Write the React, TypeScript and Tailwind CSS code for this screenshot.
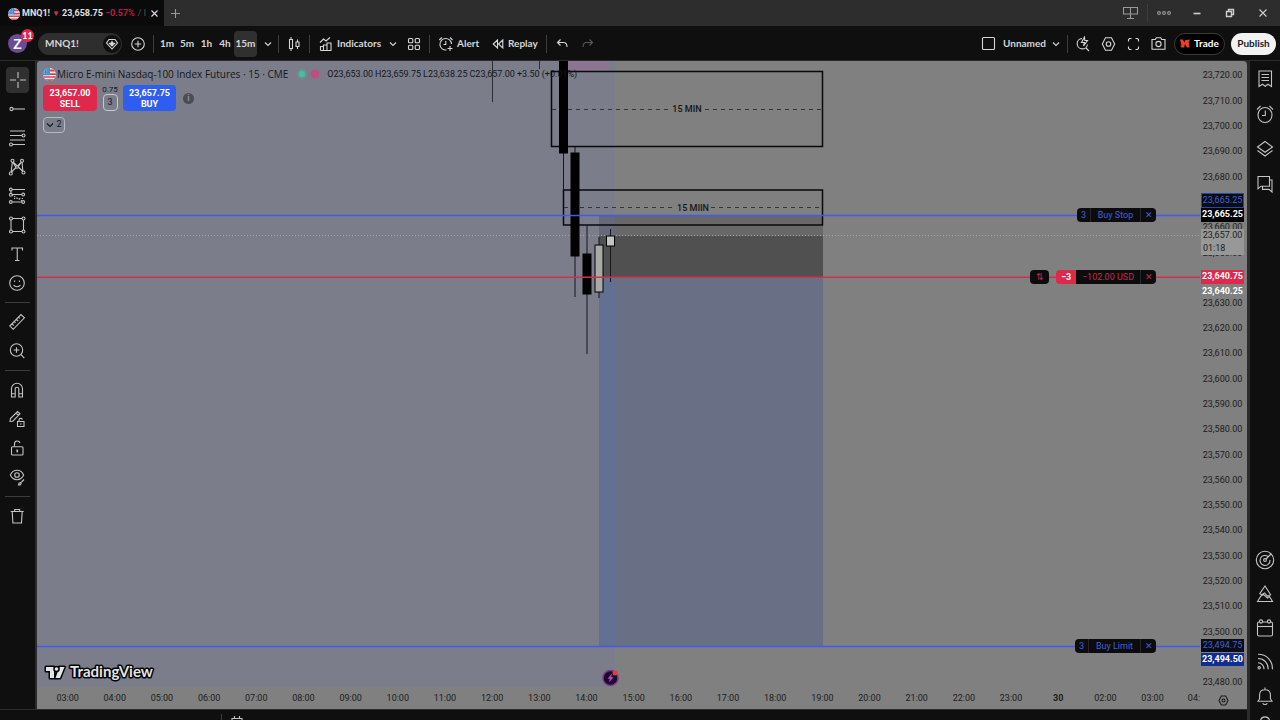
import React from "react";

type IconProps = { children: React.ReactNode; className?: string; w?: number; h?: number };

function Icon({ children, className = "", w = 20, h = 20 }: IconProps) {
  return (
    <svg
      width={w}
      height={h}
      viewBox={`0 0 ${w} ${h}`}
      fill="none"
      stroke="currentColor"
      strokeWidth={1.1}
      className={`shrink-0 ${className}`}
      aria-hidden="true"
    >
      {children}
    </svg>
  );
}

const Chevron = () => (
  <Icon w={8} h={8}><path d="M1 2.5 4 5.5 7 2.5" /></Icon>
);

const Flag = ({ size }: { size: number }) => (
  <svg width={size} height={size} viewBox="0 0 12 12" className="shrink-0" aria-hidden="true">
    <clipPath id={`flag${size}`}><circle cx="6" cy="6" r="6" /></clipPath>
    <g clipPath={`url(#flag${size})`}>
      <path fill="#f1f1f3" d="M0 0h12v12H0z" />
      <path fill="#d8424e" d="M6 1.4h6v1.8H6zM6 4.8h6v1.6H6zM0 7.6h12v1.5H0zM0 10.4h12V12H0z" />
      <path fill="#2f86d6" d="M0 0h6.4v6.6H0z" />
      <path stroke="#cfe4f7" strokeWidth=".6" strokeDasharray=".8 .8" d="M1 2h5M1 3.6h5M1 5.2h5" />
    </g>
  </svg>
);

const Divider = () => <div className="h-[18px] w-px shrink-0 bg-[#3d3d3d]" />;

const drawTools: { label: string; icon: React.ReactNode }[][] = [
  [
    { label: "Cross", icon: <path d="M10 2v6M10 12v6M2 10h6M12 10h6" /> },
    { label: "Trend line", icon: <><circle cx="4.5" cy="10" r="1.6" /><path d="M6.2 10H18" /></> },
    { label: "Fib retracement", icon: <><path d="M3 3h15M3 7.5h12M3 12h15M6 16.5h12" /><circle cx="16.5" cy="7.5" r="1.5" fill="#0f0f0f" /><circle cx="4" cy="16.5" r="1.5" fill="#0f0f0f" /></> },
    { label: "Patterns", icon: <><path d="M4 16 5.5 4.5 16 14.5M16 16 15 4.5 4.5 15M5.5 4.5l3.500 6M15 4.500 11 10" /><circle cx="5.5" cy="3.8" r="1.5" fill="#0f0f0f" /><circle cx="15" cy="3.8" r="1.5" fill="#0f0f0f" /><circle cx="3.8" cy="16.5" r="1.5" fill="#0f0f0f" /><circle cx="16.5" cy="15.5" r="1.5" fill="#0f0f0f" /><circle cx="10" cy="10" r="1.3" fill="#0f0f0f" /></> },
    { label: "Prediction", icon: <><path d="M4 3.5h14M4 8.5h12M4 16h12" /><path strokeDasharray="1.2 1.4" d="M5 9l10 6M7 12.5h10" /><path d="M4 4v5" /><circle cx="3.8" cy="3.5" r="1.4" fill="#0f0f0f" /><circle cx="3.8" cy="8.8" r="1.4" fill="#0f0f0f" /><circle cx="16.2" cy="8.5" r="1.4" fill="#0f0f0f" /><circle cx="3.8" cy="16" r="1.4" fill="#0f0f0f" /><circle cx="16.2" cy="16" r="1.4" fill="#0f0f0f" /></> },
    { label: "Rectangle", icon: <><path d="M4 3.5h12.5v13H4z" /><circle cx="4" cy="3.5" r="1.5" fill="#0f0f0f" /><circle cx="16.5" cy="3.5" r="1.5" fill="#0f0f0f" /><circle cx="4" cy="16.5" r="1.5" fill="#0f0f0f" /><circle cx="16.5" cy="16.5" r="1.5" fill="#0f0f0f" /></> },
    { label: "Text", icon: <path d="M5 6.5V4h10.500v2.500M10.250 4v12.500M8 16.500h4.500" /> },
    { label: "Emoji", icon: <><circle cx="10" cy="10" r="7.300" /><path d="M7.600 7.500v1.500M12.400 7.500v1.500M6.500 12c1.500 2.300 5.500 2.300 7 0" /></> },
  ],
  [
    { label: "Measure", icon: <path d="M2.800 14 14 2.600l3.400 3.200L6.200 17.300zM5 11.800l1.700 1.700M7.200 9.500l1.300 1.300M9.400 7.200l1.800 1.800M11.600 5l1.300 1.300" /> },
    { label: "Zoom in", icon: <><circle cx="9.500" cy="9" r="6.200" /><path d="M14 13.600l3.300 3.600M9.500 6.200v5.600M6.700 9h5.600" /></> },
  ],
  [
    { label: "Magnet", icon: <path d="M4.500 17V8.700a5.500 5.500 0 0 1 11 0V17h-3.700V9a1.800 1.800 0 0 0-3.600 0v8zM4.500 13.800h3.700M11.800 13.800h3.700" /> },
    { label: "Stay in drawing mode", icon: <><path d="M3 12.500 3.500 9.500 10.500 2.500l2.500 2.300-7.200 7.400zM9 4l2.500 2.500M10.500 12.500h6.500v5h-6.500zM12 12.500v-1.600c0-2 3.200-2 3.400-.3" /><path d="M13.800 14.300v1.500" /></> },
    { label: "Lock all drawings", icon: <><rect x="4.500" y="8.700" width="11.500" height="8.300" rx="1" /><path d="M7.500 8.500V6c0-3.700 4.700-3.800 5.400-1" /><path strokeWidth="1.600" d="M10.250 11.500v2.800" /></> },
    { label: "Hide all drawings", icon: <><path d="M3.400 8c2.700-6.300 10.500-6.300 13.200 0-2.700 6.300-10.500 6.300-13.200 0z" /><circle cx="10" cy="8" r="2.300" /><path d="M11.500 18c.2-2 1.200-2.800 2.500-2.500.5 1.700-1 2.800-2.500 2.500zM14.500 15l2.500-2.500" /></> },
  ],
  [{ label: "Remove", icon: <path d="M3.700 5.500h13M7.700 5.200V3.500h5v1.700M5.200 5.500l.7 11.500h8.600l.7-11.500" /> }],
];

const sideTop = [
  { label: "Watchlist", icon: <path d="M4 2h12.500v15.500L13 15.200l-2.750 2-2.750-2L4 17.500zM6.500 5.500h7.500M6.500 8.500h7.500M6.500 11.500h7.500" /> },
  { label: "Alerts", icon: <><ellipse cx="10" cy="11" rx="7" ry="7.500" /><path d="M10.300 6.500v5H7M2 5.500 5.500 2M18 5.500 14.500 2" /></> },
  { label: "Object tree", icon: <path d="M10 2.500 17.500 8 10 13.300 2.500 8zM2.500 11.500 10 17l7.500-5.500" /> },
  { label: "Chats", icon: <path d="M3 2.500h11.500v9.700H6L3 14.800zM14.500 6H17v12l-3-2.600H7.500v-3" /> },
];

const sideBottom = [
  { label: "Screeners", icon: <><circle cx="10" cy="10" r="8.700" /><path d="M13.200 6.600A5 5 0 1 0 15 10" /><circle cx="10" cy="10" r="1.400" /><path d="m11 9 5-5" /></> },
  { label: "Pine", icon: <path d="M10 2 4.800 9.600l2 1.200 2.700-1.900 3 3.300 3.100-1.500zM2.500 17.500 6 12l2.500-1.500 4 3.500 2-1.500 3 5z" /> },
  { label: "Calendars", icon: <><rect x="2.500" y="4" width="15" height="14" rx="1.500" /><path d="M2.500 8.500h15" /><circle cx="6" cy="3.500" r="1.600" fill="#0f0f0f" /><circle cx="14" cy="3.500" r="1.600" fill="#0f0f0f" /></> },
  { label: "Ideas stream", icon: <><path d="M3 2.200c9 0 14.500 6.500 14.500 15M3 6.500c6.200 0 10.200 4.500 10.200 10.700M3 10.700c3.500 0 6 2.800 6 6.500" /><circle cx="4.200" cy="15.800" r="1.200" /></> },
  { label: "Notifications", icon: <path d="M10 1.500v2M3 15.200l1.600-2.500V8.500C5 2.200 15 2.200 15.400 8.500v4.200L17 15.200zM7.700 17.200c.8 1.800 3.800 1.800 4.600 0" /> },
];

const prices = Array.from({ length: 25 }, (_, i) => {
  const v = 23720 - i * 10;
  return `${Math.floor(v / 1000)},${String(v % 1000).padStart(3, "0")}.00`;
});

const coveredPrices = ["23,670.00", "23,660.00", "23,650.00", "23,640.00", "23,490.00"];

const times = [
  ...Array.from({ length: 21 }, (_, i) => `${String(i + 3).padStart(2, "0")}:00`),
  "30", "02:00", "03:00",
];

function TabStrip() {
  return (
    <div className="flex h-[26px] shrink-0 bg-[#2d2d2d] text-[#e0e0e0]">
      <div className="flex w-[164px] items-center bg-[#0a0a0a] pl-2 pt-px text-[9px] font-bold">
        <Flag size={12} />
        <span className="ml-[2px]">MNQ1!</span>
        <span className="mx-[2px] text-[8px] text-[#e0284a]">▼</span>
        <span>23,658.75</span>
        <span className="ml-[2px] text-[#b8203d]">−0.57%</span>
        <span className="ml-[3px] whitespace-nowrap font-normal text-[#555]">/ l</span>
        <button aria-label="Close tab" className="ml-auto mr-[5px]">
          <Icon w={9} h={9}><path d="m1.500 1.500 6 6m0-6-6 6" /></Icon>
        </button>
      </div>
      <button aria-label="New tab" className="ml-[6px] text-[#999]">
        <Icon w={11} h={11}><path d="M5.500 1v9M1 5.500h9" /></Icon>
      </button>
      <div className="ml-auto flex items-center text-[#999]">
        <button aria-label="Layouts" className="mr-2">
          <Icon w={17} h={16}><path d="M1.500 2.500h14v6.500h-14zM8.500 2.500v11M5 13.500h7" /></Icon>
        </button>
        <Divider />
        <button aria-label="More" className="ml-2">
          <Icon w={16} h={8}><circle cx="3" cy="4" r="1.400" /><circle cx="8" cy="4" r="1.400" /><circle cx="13" cy="4" r="1.400" /></Icon>
        </button>
        <div className="flex text-[#cfcfcf]">
          <button aria-label="Minimize" className="grid w-[33px] place-items-center pl-4">
            <Icon w={10} h={10}><path strokeWidth="1.600" d="M1.500 5.500h7" /></Icon>
          </button>
          <button aria-label="Restore" className="grid w-[33px] place-items-center pl-4">
            <Icon w={10} h={10}><path strokeWidth="1.400" d="M1.500 3.500h5v5h-5zM3.500 3V1.500h5v5H7" /></Icon>
          </button>
          <button aria-label="Close" className="grid w-[42px] place-items-center pl-2">
            <Icon w={10} h={10}><path d="m1.500 1.500 7 7m0-7-7 7" /></Icon>
          </button>
        </div>
      </div>
    </div>
  );
}

function Toolbar() {
  return (
    <header className="mb-px flex h-[34px] shrink-0 items-center bg-[#0f0f0f] pr-1 pt-px font-['Lato','Open_Sans',sans-serif] text-[10px] font-bold text-[#d6d6d6]">
      <button aria-label="Account" className="relative ml-2 grid size-[19px] place-items-center rounded-full bg-[#6b4b94] text-[14px] leading-none text-white">
        Z
        <span className="absolute -right-[7px] -top-[5px] grid size-[13px] place-items-center rounded-full bg-[#e0284a] text-[9px]">11</span>
      </button>
      <button className="ml-[11px] flex h-[22px] w-[84px] items-center justify-between rounded-full bg-[#2e2e2e] pl-[7px] pr-px">
        MNQ1!
        <span className="grid size-[18px] place-items-center rounded-full bg-[#0f0f0f]">
          <Icon w={14} h={14}><path d="M4 2.500h6l2.500 3.500L7 12 1.500 6z" /><path fill="currentColor" d="M7 4.500 8 6l1.600.3L7 9 4.400 6.300 6 6z" /></Icon>
        </span>
      </button>
      <button aria-label="Compare" className="ml-2 mr-[7px]">
        <Icon w={16} h={16}><circle cx="8" cy="8" r="6.300" /><path d="M8 4.800v6.400M4.800 8h6.400" /></Icon>
      </button>
      <Divider />
      <div className="ml-[3px] flex items-center">
        <button className="w-[20px]">1m</button>
        <button className="w-[20px]">5m</button>
        <button className="w-[19px]">1h</button>
        <button className="w-[18px]">4h</button>
        <button className="h-[26px] w-[23px] rounded bg-[#303030]">15m</button>
        <button aria-label="Intervals" className="grid w-[21px] place-items-center"><Chevron /></button>
      </div>
      <Divider />
      <button aria-label="Chart type" className="grid w-[30px] place-items-center">
        <Icon w={14} h={18}><path d="M2.500 4.500h3v9h-3zM4 2v2.500M4 13.500V16M9 7h3v4.500H9zM10.500 4.500V7M10.500 11.500V14" /></Icon>
      </button>
      <Divider />
      <button className="ml-[9px] flex w-[64px] items-center gap-1">
        <Icon w={14} h={16}><path d="M1.500 14.500v-4h3v4M4.500 14.500V9h3.500v5.500M8 14.500V7h4v7.500zM1.500 14.500H8M1 6.500 4.500 3l2.500 2L11 1.500" /></Icon>
        Indicators
      </button>
      <button aria-label="Favorite indicators" className="ml-[6px]"><Chevron /></button>
      <button aria-label="Templates" className="ml-[10px] mr-2">
        <Icon w={14} h={14}><rect x="1.500" y="1.500" width="4.300" height="4.300" rx="1" /><rect x="8.200" y="1.500" width="4.300" height="4.300" rx="1" /><rect x="1.500" y="8.200" width="4.300" height="4.300" rx="1" /><rect x="8.200" y="8.200" width="4.300" height="4.300" rx="1" /></Icon>
      </button>
      <Divider />
      <button className="ml-2 flex w-[43px] items-center gap-[3px]">
        <Icon w={16} h={16}><path d="M8.500 14A5.800 5.800 0 1 1 13.500 8M7.800 5v3.500H5.500M1.200 4 4 1.500M14.500 4 12 1.500M12 10v5M9.500 12.500h5" /></Icon>
        Alert
      </button>
      <button className="ml-[11px] flex w-[54px] items-center gap-1">
        <Icon w={12} h={12}><path d="M5.500 2 1.200 6l4.300 4zM10.800 2 6.500 6l4.300 4z" /></Icon>
        Replay
      </button>
      <Divider />
      <button aria-label="Undo" className="ml-[9px]"><Icon w={13} h={12}><path d="M4.500 1.500 1.500 4.500l3 3M1.800 4.500h5.700c2 0 3.500 1.500 3.500 4.500" /></Icon></button>
      <button aria-label="Redo" className="ml-[12px] text-[#5a5a5a]"><Icon w={13} h={12}><path d="M8.500 1.500l3 3-3 3M11.200 4.500H5.500C3.500 4.500 2 6 2 9" /></Icon></button>

      <div className="ml-auto flex items-center">
        <button className="flex w-[66px] items-center gap-[7px]">
          <Icon w={15} h={15}><rect x="1.500" y="1.500" width="12" height="12" rx="1" /></Icon>
          Unnamed
        </button>
        <button aria-label="Manage layouts" className="ml-[5px] mr-[7px]"><Chevron /></button>
        <Divider />
        <button aria-label="Quick search" className="grid w-[29px] place-items-center">
          <Icon w={14} h={16}><path d="M6 2.500a5.200 5.200 0 1 0 5.500 6M10 12l3 3M8.500 1 5.500 6.500h3L7.500 10l4-5.500H8.800z" /></Icon>
        </button>
        <button aria-label="Settings" className="grid w-[22px] place-items-center">
          <Icon w={15} h={16}><path d="M4.500 1.700h6L13.700 8l-3.200 6.300h-6L1.300 8z" /><circle cx="7.500" cy="8" r="2.300" /></Icon>
        </button>
        <button aria-label="Fullscreen" className="grid w-[28px] place-items-center">
          <Icon w={13} h={14}><path d="M1.500 4.500v-2l1-1h2M8.500 1.500h2l1 1v2M11.500 9.500v2l-1 1h-2M4.500 12.500h-2l-1-1v-2" /></Icon>
        </button>
        <button aria-label="Snapshot" className="grid w-[23px] place-items-center">
          <Icon w={15} h={15}><path d="M1 3.500h3.300l1-1.700h4.400l1 1.700H14v9.700H1z" /><circle cx="7.500" cy="8" r="2.600" /></Icon>
        </button>
        <button className="ml-1 flex h-[22px] w-[51px] items-center gap-1 rounded-full border border-[#3a3a3a] bg-black pl-[5px] text-white">
          <svg width="10" height="9" viewBox="0 0 10 9" className="shrink-0" aria-hidden="true"><path fill="#f0401f" d="M0 .5h2.600l1.900 3L5.500 1 10 .5 8.700 3l.8 5.500H7L5 5l-.8 3.500H1.500L.3 7l1.200-1z" /></svg>
          Trade
        </button>
        <button className="ml-[6px] h-[22px] w-[45px] rounded-full bg-[#f2f2f2] text-[#1a1a1a]">Publish</button>
      </div>
    </header>
  );
}

function DrawingTools() {
  return (
    <nav className="w-[35px] shrink-0 bg-[#0f0f0f] pt-1 text-[#c4c4c4]">
      {drawTools.map((group, g) => (
        <div key={g}>
          {g > 0 && <hr className="mx-[5px] mb-1 mt-[5px] border-[#3d3d3d]" />}
          {group.map((tool) => (
            <button key={tool.label} aria-label={tool.label} className="flex h-[29px] w-full items-center pl-[6px]">
              <span className={tool.label === "Cross" ? "flex h-[26px] w-[23px] items-center justify-center rounded bg-[#303030]" : "flex w-[22px] items-center justify-center"}>
                <Icon>{tool.icon}</Icon>
              </span>
            </button>
          ))}
        </div>
      ))}
    </nav>
  );
}

function Candle({ x, top, bottom, high, low, fill }: { x: number; top: number; bottom: number; high: number; low: number; fill: string }) {
  return (
    <g>
      <path d={`M${x} ${high}V${low}`} stroke="#15171b" />
      <rect x={x - 4} y={top} width={8} height={bottom - top} fill={fill} stroke="#000" />
    </g>
  );
}

function Plot() {
  return (
    <svg className="absolute inset-0 h-full w-full" aria-label="15 minute price chart">
      <g transform="translate(-37 -61)">
        <rect x="37" y="61" width="578" height="626" fill="#7b7e8a" />
        <rect x="568" y="61" width="42" height="10" fill="#8c7590" />
        <rect x="599" y="215" width="224" height="21" fill="#686868" />
        <rect x="599" y="236" width="224" height="41" fill="#505050" />
        <rect x="599" y="277" width="224" height="369" fill="#696f84" />
        <rect x="599" y="277" width="16" height="369" fill="#627092" />
        <rect x="599" y="215" width="16" height="21" fill="#66697a" />

        <path d="M492.500 61V102M539.500 61V69" stroke="#2c2e33" />
        <g fill="none" stroke="#08090b" strokeWidth="1.500">
          <rect x="551.500" y="71.500" width="271" height="75" />
          <rect x="563.500" y="190" width="259" height="35" />
        </g>
        <g stroke="#33353a" strokeDasharray="4 4">
          <path d="M552 109.500H670M705 109.500H822" />
          <path d="M564 207.500H675M711 207.500H822" />
        </g>
        <g fontSize="9" fontWeight="500" fill="#15161a" textAnchor="middle">
          <text x="687" y="112">15 MIN</text>
          <text x="693" y="211">15 MIIN</text>
        </g>

        <path d="M37 235.500H4000" stroke="#a3a3a3" strokeDasharray="1 2" />
        <Candle x={563.5} top={50} bottom={153} high={50} low={190} fill="#000" />
        <Candle x={575} top={153} bottom={256} high={147} low={297} fill="#000" />
        <Candle x={587} top={254} bottom={294} high={225} low={354} fill="#000" />
        <Candle x={599} top={245} bottom={292} high={237} low={298} fill="#a9aaa6" />
        <Candle x={610.5} top={236} bottom={246} high={229} low={282} fill="#c3c3c1" />

        <g strokeWidth="1.400">
          <path d="M37 215.500H4000M37 646.500H4000" stroke="#4259ea" />
          <path d="M37 277.300H4000" stroke="#d42e4c" />
        </g>

        <g transform="translate(610.500 678)">
          <circle r="7.500" fill="#1c0a26" stroke="#7c3594" strokeWidth="1.500" />
          <path d="M1.500-4.500-3 .8h2.300L-1.500 4.500 3-.8H.7z" fill="#b44ad0" />
          <circle cx="4.500" cy="-5" r="2.500" fill="#e53a3f" />
        </g>

        <g stroke="#000" strokeWidth="3" strokeLinejoin="round" fill="#e4e5e8" paintOrder="stroke">
          <path d="M46 667h8v11h-4v-7h-4zM59.500 667h5L60 678h-4.500z" />
          <circle cx="56.500" cy="669" r="1.800" />
          <text x="70" y="677" fontSize="15" fontWeight="700" fontFamily="Lato, sans-serif">TradingView</text>
        </g>
      </g>
    </svg>
  );
}

function Legend() {
  return (
    <div className="relative pl-[6px] pt-[5px] text-[#15161a]">
      <div className="flex h-4 items-center">
        <Flag size={13} />
        <h1 className="ml-px whitespace-nowrap font-['Open_Sans','Noto_Sans',sans-serif] text-[10px]">Micro E-mini Nasdaq-100 Index Futures · 15 · CME</h1>
        <span className="ml-[11px] size-[6px] rounded-full bg-[#3fc49b] ring-2 ring-[#3fc49b]/30" />
        <span className="ml-[6px] size-[8px] rounded-full bg-[#b94f82] ring-2 ring-[#b94f82]/30" />
        <div className="ml-2 flex gap-[2px] whitespace-nowrap pt-px text-[9px]">
          <span>O23,653.00</span><span>H23,659.75</span><span>L23,638.25</span><span>C23,657.00</span><span>+3.50 (+0.01%)</span>
        </div>
      </div>
      <div className="mt-[3px] flex h-[26px] items-center text-[9px] leading-[11px]">
        <button className="h-[26px] w-[54px] rounded bg-[#e0284a] pt-px font-bold text-white">23,657.00<span className="block">SELL</span></button>
        <div className="w-[26px] text-center">
          <div className="text-[8px] leading-[8px]">0.75</div>
          <button className="h-[17px] w-[15px] rounded border border-[#c9c9c9]">3</button>
        </div>
        <button className="h-[26px] w-[53px] rounded bg-[#2f5df0] pt-px font-bold text-white">23,657.75<span className="block">BUY</span></button>
        <span className="ml-[7px] grid size-[11px] place-items-center rounded-full bg-[#4b4d53] font-bold leading-none text-[#8b8d95]">i</span>
      </div>
      <button className="mt-[6px] flex h-4 w-[22px] items-center justify-center gap-[2px] rounded-sm border border-[#b9bac0] text-[9px]">
        <Chevron />2
      </button>
    </div>
  );
}

function OrderTags() {
  return (
    <div className="text-[9px] leading-[14px]">
      <div className="absolute right-11 top-[147px] flex h-[14px] items-center divide-x divide-[#262626] rounded-sm bg-[#0c0c0e] text-[#4160d8]">
        <span className="w-[14px] text-center">3</span>
        <span className="w-[50px] text-center">Buy Stop</span>
        <button aria-label="Cancel buy stop" className="w-[15px]">✕</button>
      </div>
      <div className="absolute right-11 top-[209px] flex h-[14px] items-center whitespace-nowrap text-[#c02c48]">
        <button aria-label="Reverse position" className="mr-[7px] h-[14px] w-[19px] rounded-sm bg-[#0c0c0e]">⇅</button>
        <span className="w-5 rounded-l-sm bg-[#e0284a] text-center font-bold text-white">−3</span>
        <span className="w-[64px] bg-[#0c0c0e] text-center">−102.00 USD</span>
        <button aria-label="Close position" className="w-[16px] rounded-r-sm border-l border-[#262626] bg-[#0c0c0e]">✕</button>
      </div>
      <div className="absolute right-11 top-[578px] flex h-[14px] items-center divide-x divide-[#262626] rounded-sm bg-[#0c0c0e] text-[#4160d8]">
        <span className="w-[14px] text-center">3</span>
        <span className="w-[52px] text-center">Buy Limit</span>
        <button aria-label="Cancel buy limit" className="w-[15px]">✕</button>
      </div>
    </div>
  );
}

function PriceAxis() {
  const tag = "absolute left-px w-[43px] text-center leading-[13px]";
  return (
    <div className="relative flex w-[47px] shrink-0 flex-col bg-[#808080] pt-[2px]">
      {prices.map((p) => (
        <div key={p} className="flex flex-1 items-center justify-center pr-[2px] pt-px">{coveredPrices.includes(p) ? "" : p}</div>
      ))}
      <button aria-label="Axis settings" className="flex h-[14px] justify-center">
        <Icon w={11} h={11}><path d="M3.300 1h4.400L10 5.500 7.700 10H3.300L1 5.500z" /><circle cx="5.500" cy="5.500" r="1.500" /></Icon>
      </button>
      <span className={`${tag} top-[132px] border border-[#2746a8] bg-[#0a0c14] text-[#4160d8]`}>23,665.25</span>
      <span className={`${tag} top-[160px]`}>23,660.00</span>
      <span className={`${tag} top-[186px]`}>23,650.00</span>
      <span className={`${tag} top-[147px] h-[14px] bg-black font-bold text-white`}>23,665.25</span>
      <span className={`${tag} top-[168px] bg-[#989898] text-left leading-[12px]`}><span className="block text-center">23,657.00</span><span className="pl-[2px]">01:18</span></span>
      <span className={`${tag} top-[209px] h-[14px] bg-[#e0284a] font-bold text-white`}>23,640.75</span>
      <span className={`${tag} top-[224px] font-bold text-white`}>23,640.25</span>
      <span className={`${tag} top-[578px] bg-[#0a0c14] text-[#4160d8]`}>23,494.75</span>
      <span className={`${tag} top-[592px] bg-[#122d91] font-bold text-white`}>23,494.50</span>
    </div>
  );
}

export default function App() {
  return (
    <div className="flex h-screen flex-col overflow-hidden bg-[#2b2b2b] font-['Roboto','Open_Sans',sans-serif] [&_button]:cursor-pointer">
      <TabStrip />
      <Toolbar />
      <div className="flex min-h-0 flex-1">
        <div className="flex min-w-0 flex-1 flex-col">
          <div className="flex min-h-0 flex-1">
            <DrawingTools />
            <main className="ml-[2px] flex min-w-0 flex-1 overflow-hidden rounded-t text-[9px] text-[#1c1c1c]">
              <div className="flex min-w-0 flex-1 flex-col bg-[#808080]">
                <div className="relative min-h-0 flex-1">
                  <Plot />
                  <Legend />
                  <OrderTags />
                </div>
                <div className="flex h-[21px] shrink-0 items-center overflow-hidden pl-[7px] text-center">
                  {times.map((t, i) => (
                    <span key={i} className={t === "30" ? "flex-1 font-bold" : "flex-1"}>{t}</span>
                  ))}
                  <span className="w-6 text-right">04:</span>
                </div>
              </div>
              <PriceAxis />
            </main>
          </div>
          <footer className="mt-px flex h-[10px] shrink-0 items-end overflow-hidden bg-[#0f0f0f] pl-[221px] text-[#c4c4c4]">
            <div className="h-[6px] w-px bg-[#3d3d3d]" />
            <Icon w={12} h={4} className="ml-[9px]"><path d="M1 4V2.500h10V4M3.500 0v3M8.500 0v3" /></Icon>
          </footer>
        </div>
        <aside className="ml-[3px] flex w-[30px] shrink-0 flex-col bg-[#0f0f0f] text-[#c4c4c4]">
          {sideTop.map((s) => (
            <button key={s.label} aria-label={s.label} className="grid h-[35px] place-items-center pt-px"><Icon>{s.icon}</Icon></button>
          ))}
          <div className="flex-1" />
          {sideBottom.map((s) => (
            <button key={s.label} aria-label={s.label} className="grid h-[34px] place-items-center"><Icon>{s.icon}</Icon></button>
          ))}
          <div className="flex h-[7px] items-end justify-center">
            <Icon w={12} h={4}><path d="M1.500 4a4.800 4.800 0 0 1 9 0" /></Icon>
          </div>
        </aside>
      </div>
    </div>
  );
}
